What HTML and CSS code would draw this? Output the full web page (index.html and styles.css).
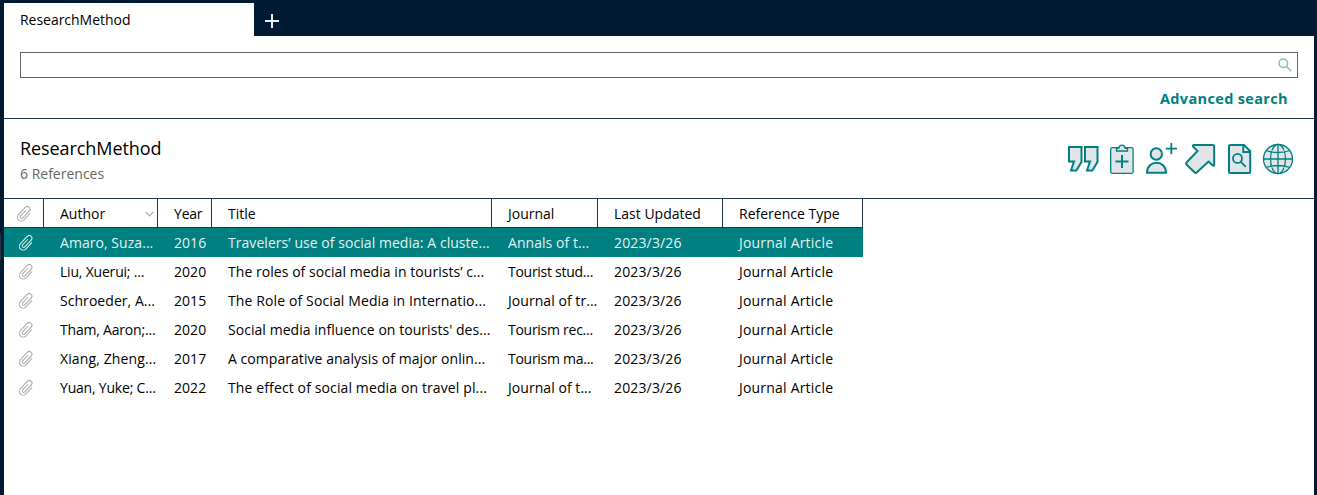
FILE: index.html
```html
<!DOCTYPE html>
<html lang="en">
<head>
<meta charset="utf-8">
<title>ResearchMethod</title>
<link rel="stylesheet" href="styles.css">
</head>
<body>
<svg class="defs" width="0" height="0">
  <symbol id="clip" viewBox="0 0 16 16">
    <path transform="rotate(43 8 8)" d="M12 3.500v8.800a3.800 3.800 0 0 1-7.600 0V2.300a2.700 2.700 0 0 1 5.400 0v9.400a1.500 1.500 0 0 1-3 0V4"/>
  </symbol>
</svg>
<div class="window">
  <div class="tabs">
    <div class="tab"><span>ResearchMethod</span></div>
    <svg class="plus" viewBox="0 0 14 14"><path d="M7 0v14M0 7h14"/></svg>
  </div>
  <main class="panel">
    <section class="search">
      <div class="searchbox">
        <svg viewBox="0 0 14 14"><circle cx="5.3" cy="5.3" r="4.3"/><path d="m8.5 8.5 4.7 4.7"/></svg>
      </div>
      <a class="advanced">Advanced search</a>
    </section>
    <section class="heading">
      <div>
        <h1>ResearchMethod</h1>
        <p><span>6 References</span></p>
      </div>
      <svg class="tools" viewBox="0 0 228 34">
        <path d="M3 4h12.500v15L10.300 27.500H5L8 18.500H3zM19 4h12.500v15l-5.200 8.500H21l3-9h-5z"/>
        <g class="thin"><rect x="44.700" y="4.700" width="22.400" height="25.600" rx="1.500"/><path d="M50.500 8V5.300h2.200c.5-4.300 6-4.300 6.500 0h2.300V8z"/></g>
        <path d="M56 12v13M49.500 18.500h13"/>
        <circle cx="90.300" cy="11" r="5.700"/><path d="M81 29.800c0-13.300 19-13.300 19 0z"/><path class="thin2" d="M105.300 0v11.200M99.700 5.600h11.200"/>
        <path d="M128 2h18.700q1.500 0 1.500 1.500V22q-.5 1.200-1.700.3L142.500 18.500 130.700 29.500q-1 .9-2 0L120.500 21.500q-1-1 0-2L131.500 8l-4.300-4.300Q126.500 2 128 2z"/>
        <path d="M164.500 2h13.500l6.200 6.200v20.300q0 1.500-1.500 1.500h-18.200q-1.500 0-1.500-1.500V3.500q0-1.500 1.500-1.500zM177.300 2v6.900h6.900"/>
        <g class="thin2"><circle cx="171.500" cy="15.400" r="4.500"/><path d="m174.800 18.800 5 5"/></g>
        <g class="thin"><circle cx="212" cy="16" r="14.500"/><ellipse cx="212" cy="16" rx="7.500" ry="14.500"/><path d="M212 1.500v29M197.500 16h29M200 7.500q12 4 24 0M200 24.500q12-4 24 0"/></g>
      </svg>
    </section>
    <table>
      <colgroup><col class="c-clip"><col class="c-author"><col class="c-year"><col class="c-title"><col class="c-journal"><col class="c-date"><col class="c-type"></colgroup>
      <thead>
        <tr><th><svg class="clip"><use href="#clip"/></svg></th><th><div class="sort"><span>Author</span><svg viewBox="0 0 9 6"><path d="m.7.8 3.8 4 3.800-4"/></svg></div></th><th class="year">Year</th><th>Title</th><th>Journal</th><th>Last Updated</th><th>Reference Type</th></tr>
      </thead>
      <tbody>
        <tr class="selected"><td><svg class="clip"><use href="#clip"/></svg></td><td>Amaro, Suza...</td><td>2016</td><td>Travelers’ use of social media: A cluste...</td><td>Annals of t...</td><td>2023/3/26</td><td>Journal Article</td></tr>
        <tr><td><svg class="clip"><use href="#clip"/></svg></td><td class="tight">Liu, Xuerui; ...</td><td>2020</td><td>The roles of social media in tourists’ c...</td><td class="snug">Tourist stud...</td><td>2023/3/26</td><td>Journal Article</td></tr>
        <tr><td><svg class="clip"><use href="#clip"/></svg></td><td>Schroeder, A...</td><td>2015</td><td class="open">The Role of Social Media in Internatio...</td><td>Journal of tr...</td><td>2023/3/26</td><td>Journal Article</td></tr>
        <tr><td><svg class="clip"><use href="#clip"/></svg></td><td class="tight">Tham, Aaron;...</td><td>2020</td><td>Social media influence on tourists' des...</td><td class="snug">Tourism rec...</td><td>2023/3/26</td><td>Journal Article</td></tr>
        <tr><td><svg class="clip"><use href="#clip"/></svg></td><td class="open">Xiang, Zheng...</td><td>2017</td><td>A comparative analysis of major onlin...</td><td class="snug">Tourism ma...</td><td>2023/3/26</td><td>Journal Article</td></tr>
        <tr><td><svg class="clip"><use href="#clip"/></svg></td><td class="tight">Yuan, Yuke; C...</td><td>2022</td><td class="open">The effect of social media on travel pl...</td><td>Journal of t...</td><td>2023/3/26</td><td>Journal Article</td></tr>
      </tbody>
    </table>
  </main>
</div>
</body>
</html>
```
FILE: styles.css
```css
* { box-sizing: border-box; }
body { margin: 0; background: linear-gradient(#22344c, #22344c) 0 233px / 1px 27px no-repeat #001a33; color: #000; font: 14px/20px "Open Sans", "Noto Sans", sans-serif; overflow: hidden; }
.defs { display: block; height: 0; }
svg { fill: none; flex: none; }
.window { height: 495px; padding: 3px 3px 0 4px; display: flex; flex-direction: column; }
.tabs { display: flex; height: 33px; }
.tab { width: 250px; background: #fff; padding: 7px 16px; letter-spacing: -.03px; }
.plus { width: 14px; height: 14px; margin: 11px 0 0 11px; stroke: #e8ecef; stroke-width: 2; }
.panel { flex: 1; background: linear-gradient(#1f3650, #1f3650) 0 162px / 100% 1px no-repeat #fff; }
.search { height: 83px; padding: 16px 16px 0; border-bottom: 1px solid #1f3650; display: flex; flex-direction: column; }
.searchbox { height: 26px; border: 1px solid #666; display: flex; justify-content: flex-end; padding: 5px 5px 0 0; }
.searchbox svg { width: 14px; height: 14px; stroke: #80bfbf; stroke-width: 1.5; }
.advanced { align-self: flex-end; margin: 11px 10px 0 0; font-size: 14.5px; font-weight: 700; letter-spacing: .35px; color: #008080; }
.heading { height: 79px; padding: 16px 20px 0 16px; display: flex; justify-content: space-between; }
h1 { margin: 0; font-size: 18px; line-height: 26px; font-weight: 400; letter-spacing: -.08px; }
p { margin: 0; color: #666; line-height: 26px; }
.tools { width: 228px; height: 34px; margin-top: 8px; stroke: #008080; stroke-width: 2; fill: #e1e5e8; }
.thin { stroke-width: 1.3; }
.thin2 { stroke-width: 1.8; fill: none; }
.panel table { border-collapse: separate; border-spacing: 0; table-layout: fixed; width: 859px; }
.c-clip { width: 40px; } .c-author { width: 114px; } .c-year { width: 54px; } .c-title { width: 280px; }
.c-journal { width: 106px; } .c-date { width: 125px; } .c-type { width: 140px; }
th, td { padding: 0 0 0 16px; text-align: left; font-weight: 400; white-space: nowrap; }
th { height: 30px; padding-top: 2px; border-right: 1px solid #1f3650; border-bottom: 1px solid #1f3650; }
.year { letter-spacing: -.2px; }
td { height: 29px; letter-spacing: .05px; }
td:nth-child(6) { letter-spacing: .15px; }
td:nth-child(7) { letter-spacing: .2px; }
td.snug { letter-spacing: -.27px; }
td.tight { letter-spacing: -.2px; }
td.open { letter-spacing: .12px; }
th:first-child { padding-left: 12px; }
td:first-child { padding-left: 14px; }
.selected td { background: #008080; color: #e3f1f1; }
.clip { width: 16px; height: 16px; display: block; stroke: #a8a8a8; stroke-width: 1; overflow: visible; }
.clip, #clip { overflow: visible; }
.selected .clip { stroke: #e3f1f1; }
.sort { display: flex; justify-content: space-between; align-items: center; padding-right: 3px; }
.sort svg { width: 9px; height: 6px; stroke: #aaa; stroke-width: 1.200; }
```
